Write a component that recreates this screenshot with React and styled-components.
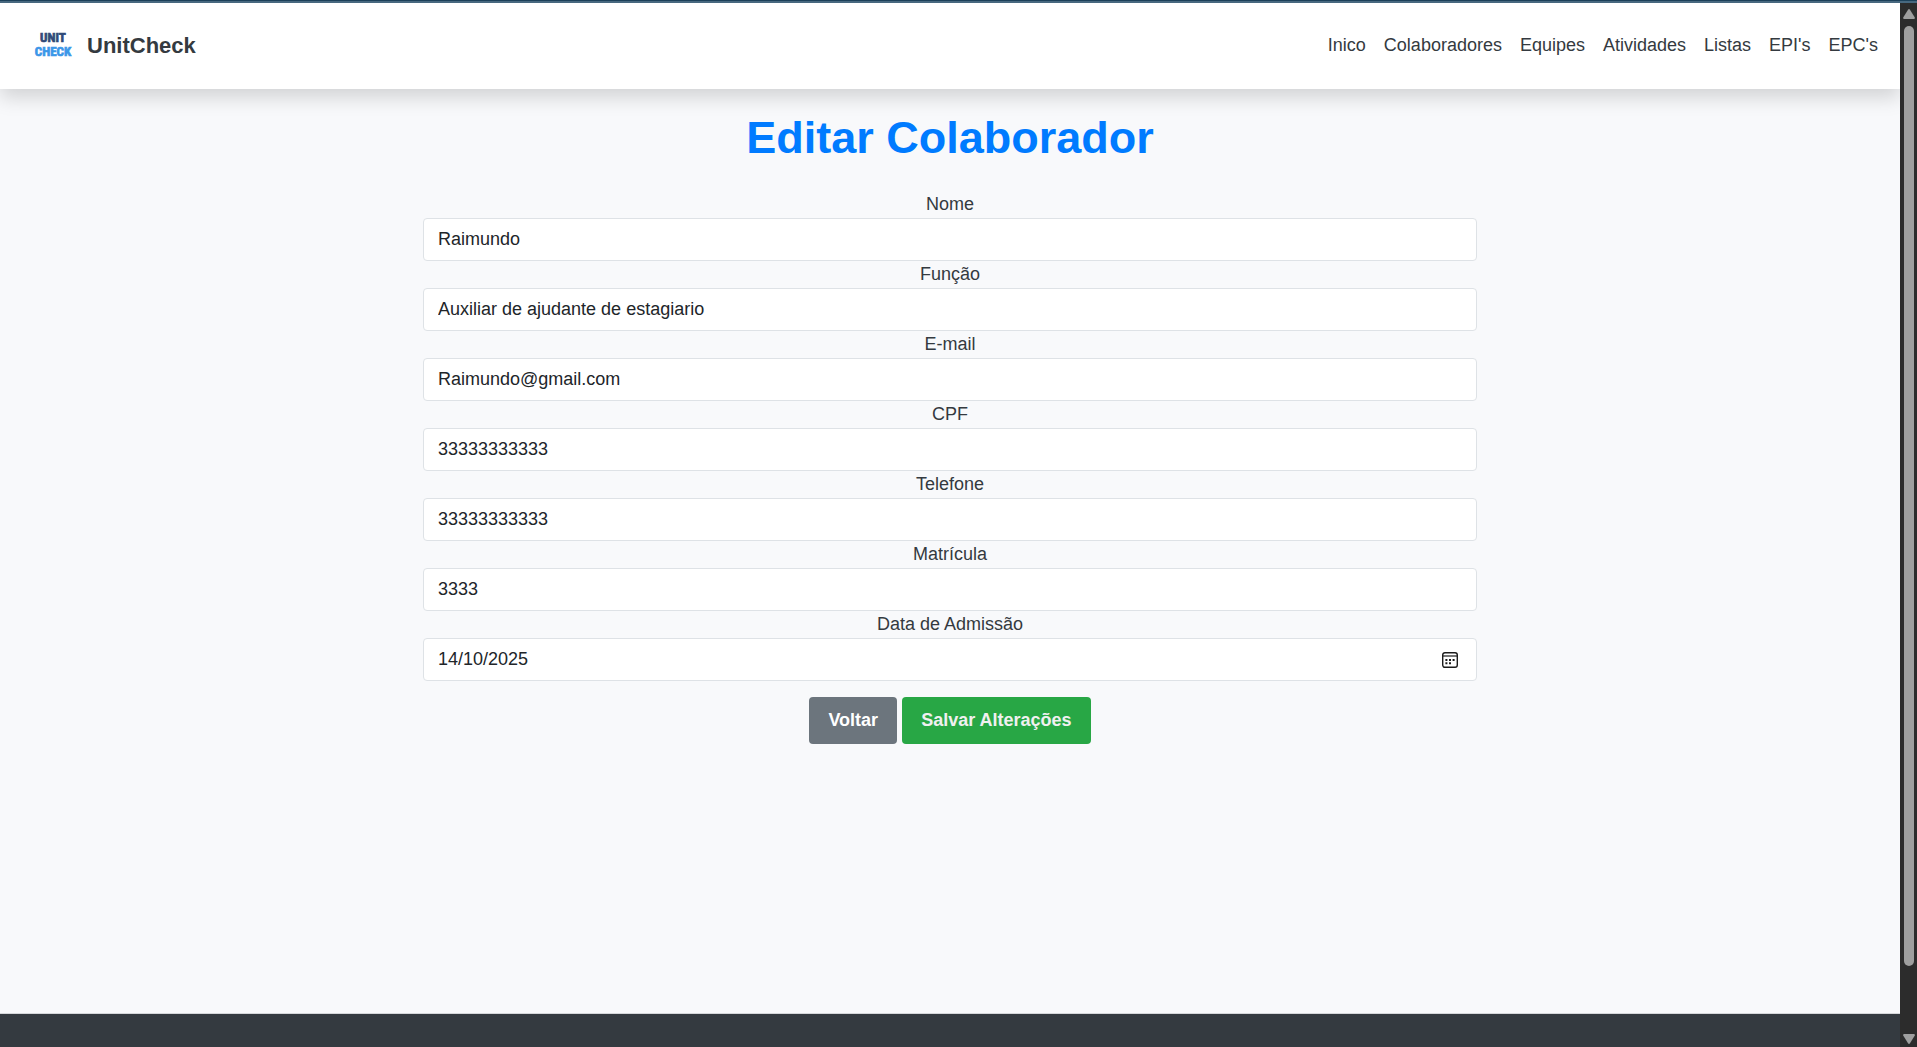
import React from "react";
import styled, { createGlobalStyle } from "styled-components";

const GlobalStyle = createGlobalStyle`
  *, *::before, *::after { box-sizing: border-box; }
  body {
    margin: 0;
    background: #f8f9fa;
    color: #343a40;
    font-family: "Liberation Sans", Arial, sans-serif;
    font-size: 18px;
    line-height: 27px;
  }
`;

const Frame = styled.div`
  display: flex;
  flex-direction: column;
  height: 100vh;
  overflow: hidden;
  border-top: 1px solid #1b4059;
`;

const WindowEdge = styled.div`
  flex: none;
  height: 2px;
  background: #47687f;
`;

const Viewport = styled.div`
  flex: 1;
  display: flex;
  min-height: 0;
`;

const Page = styled.div`
  flex: 1;
  display: flex;
  flex-direction: column;
  min-width: 0;
  overflow: hidden;
  background: #f8f9fb;
`;

const Header = styled.header`
  display: flex;
  align-items: center;
  justify-content: space-between;
  padding: 18px 22px 20px 31px;
  background: #fff;
  box-shadow: 0 9px 18px rgba(0, 0, 0, 0.15);
`;

const Brand = styled.a`
  display: flex;
  align-items: center;
  gap: 12px;
  color: #343a40;
  font-size: 22px;
  font-weight: 700;
  text-decoration: none;
`;

const LogoMark = styled.svg`
  display: block;
  width: 44px;
  height: 48px;
  font-family: "Roboto Condensed", "Liberation Sans Narrow", Roboto, "Liberation Sans", sans-serif;
  font-weight: 700;
`;

const Nav = styled.nav`
  display: flex;
  gap: 18px;
`;

const NavLink = styled.a`
  color: #343a40;
  text-decoration: none;
`;

const Main = styled.main`
  flex: 1;
  display: flex;
  flex-direction: column;
  align-items: center;
  padding-top: 21px;
`;

const Title = styled.h1`
  margin: 0 0 26px;
  color: #007bff;
  font-size: 45px;
  line-height: 55px;
  font-weight: 700;
`;

const Form = styled.form`
  display: flex;
  flex-direction: column;
  width: 100%;
  max-width: 1054px;
`;

const Label = styled.label`
  text-align: center;
`;

const Control = styled.div`
  display: flex;
  align-items: center;
  border: 1px solid #dee2e6;
  border-radius: 4px;
  background: #fff;
  &:focus-within { border-color: #86b7fe; }
`;

const Input = styled.input`
  flex: 1;
  min-width: 0;
  height: 41px;
  padding: 7px 14px;
  border: 0;
  outline: 0;
  background: transparent;
  color: #212529;
  font: inherit;
`;

const PickerButton = styled.button`
  display: flex;
  margin-right: 18px;
  padding: 0;
  border: 0;
  background: none;
  color: #1c1c1c;
`;

const Actions = styled.div`
  display: flex;
  justify-content: center;
  gap: 5px;
  margin-top: 16px;
`;

const Button = styled.button`
  padding: 10px 19px;
  border: 0;
  border-radius: 4px;
  background: ${(p) => (p.$kind === "save" ? "#28a745" : "#6c757d")};
  color: ${(p) => (p.$kind === "save" ? "#f0f0f0" : "#fff")};
  font: inherit;
  font-weight: 700;
`;

const Footer = styled.footer`
  flex: none;
  height: 34px;
  border-top: 1px solid #d5d7da;
  background: #343a40;
`;

const ScrollTrack = styled.div`
  flex: none;
  display: flex;
  flex-direction: column;
  align-items: center;
  width: 17px;
  padding: 6px 0 3px;
  background: #2c2c2c;
  color: #9f9f9f;
`;

const ScrollArrow = styled.svg`
  display: block;
  flex: none;
  width: 12px;
  height: 10px;
  fill: currentColor;
`;

const ScrollThumb = styled.div`
  flex: 940;
  width: 10px;
  margin-top: 7px;
  border-radius: 5px;
  background: currentColor;
`;

const ScrollRest = styled.div`
  flex: 68;
`;

const links = ["Inico", "Colaboradores", "Equipes", "Atividades", "Listas", "EPI's", "EPC's"];

const fields = [
  { id: "nome", label: "Nome", value: "Raimundo" },
  { id: "funcao", label: "Função", value: "Auxiliar de ajudante de estagiario" },
  { id: "email", label: "E-mail", value: "Raimundo@gmail.com", type: "email" },
  { id: "cpf", label: "CPF", value: "33333333333" },
  { id: "telefone", label: "Telefone", value: "33333333333", type: "tel" },
  { id: "matricula", label: "Matrícula", value: "3333" },
  { id: "admissao", label: "Data de Admissão", value: "14/10/2025", picker: true },
];

function Logo() {
  return (
    <LogoMark viewBox="0 0 44 48" aria-hidden="true">
      <text x="22" y="21" textAnchor="middle" fontSize="13" fill="#2f4a78" stroke="#2f4a78" strokeWidth="0.7">UNIT</text>
      <text x="22" y="35" textAnchor="middle" fontSize="13" fill="#3b97e8" stroke="#3b97e8" strokeWidth="0.7">CHECK</text>
    </LogoMark>
  );
}

function CalendarIcon() {
  return (
    <svg width="16" height="16" viewBox="0 0 16 16" fill="none" stroke="currentColor" aria-hidden="true">
      <rect x="0.7" y="0.7" width="14.6" height="14.6" rx="2.2" strokeWidth="1.4" />
      <path d="M1 4h14" strokeWidth="1.2" />
      <path d="M3.4 8h2M7 8h2M10.6 8h2M3.4 11.3h2M7 11.3h2" strokeWidth="2" />
    </svg>
  );
}

export default function App() {
  return (
    <>
      <GlobalStyle />
      <Frame>
        <WindowEdge />
        <Viewport>
          <Page>
            <Header>
              <Brand href="#"><Logo />UnitCheck</Brand>
              <Nav>
                {links.map((l) => <NavLink key={l} href="#">{l}</NavLink>)}
              </Nav>
            </Header>
            <Main>
              <Title>Editar Colaborador</Title>
              <Form onSubmit={(e) => e.preventDefault()}>
                {fields.map((f) => (
                  <React.Fragment key={f.id}>
                    <Label htmlFor={f.id}>{f.label}</Label>
                    <Control>
                      <Input id={f.id} type={f.type || "text"} defaultValue={f.value} />
                      {f.picker && (
                        <PickerButton type="button" aria-label="Abrir calendário">
                          <CalendarIcon />
                        </PickerButton>
                      )}
                    </Control>
                  </React.Fragment>
                ))}
                <Actions>
                  <Button type="button">Voltar</Button>
                  <Button type="submit" $kind="save">Salvar Alterações</Button>
                </Actions>
              </Form>
            </Main>
            <Footer />
          </Page>
          <ScrollTrack aria-hidden="true">
            <ScrollArrow viewBox="0 0 12 10"><path d="M5 .8Q6-.6 7 .8L11.8 8.6Q12 10 11 10H1Q0 10 .2 8.6Z" /></ScrollArrow>
            <ScrollThumb />
            <ScrollRest />
            <ScrollArrow viewBox="0 0 12 10"><path d="M5 9.2Q6 10.6 7 9.2L11.8 1.4Q12 0 11 0H1Q0 0 .2 1.4Z" /></ScrollArrow>
          </ScrollTrack>
        </Viewport>
      </Frame>
    </>
  );
}
